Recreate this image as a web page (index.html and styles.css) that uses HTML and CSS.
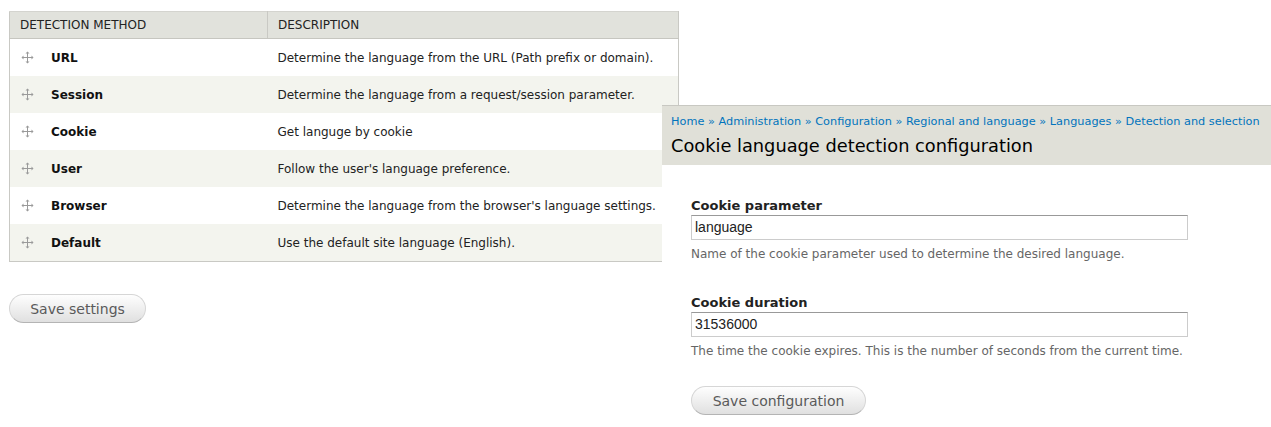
FILE: index.html
```html
<!DOCTYPE html>
<html>
<head>
<meta charset="utf-8">
<link rel="stylesheet" href="styles.css">
</head>
<body>
<div class="page">
  <table class="methods">
    <thead>
      <tr><th class="col-method">DETECTION METHOD</th><th>DESCRIPTION</th></tr>
    </thead>
    <tbody>
      <tr><td class="name"><span class="handle"><svg width="13" height="13" viewBox="0 0 13 13"><path d="M6.5 1v11M1 6.5h11" stroke="#9a9a9a" stroke-width="1"/><path d="M6.5 0.5l-2 2h4zM6.5 12.5l-2-2h4zM0.5 6.5l2-2v4zM12.5 6.5l-2-2v4z" fill="#9a9a9a"/></svg></span><b>URL</b></td><td>Determine the language from the URL (Path prefix or domain).</td></tr>
      <tr class="even"><td class="name"><span class="handle"><svg width="13" height="13" viewBox="0 0 13 13"><path d="M6.5 1v11M1 6.5h11" stroke="#9a9a9a" stroke-width="1"/><path d="M6.5 0.5l-2 2h4zM6.5 12.5l-2-2h4zM0.5 6.5l2-2v4zM12.5 6.5l-2-2v4z" fill="#9a9a9a"/></svg></span><b>Session</b></td><td>Determine the language from a request/session parameter.</td></tr>
      <tr><td class="name"><span class="handle"><svg width="13" height="13" viewBox="0 0 13 13"><path d="M6.5 1v11M1 6.5h11" stroke="#9a9a9a" stroke-width="1"/><path d="M6.5 0.5l-2 2h4zM6.5 12.5l-2-2h4zM0.5 6.5l2-2v4zM12.5 6.5l-2-2v4z" fill="#9a9a9a"/></svg></span><b>Cookie</b></td><td>Get languge by cookie</td></tr>
      <tr class="even"><td class="name"><span class="handle"><svg width="13" height="13" viewBox="0 0 13 13"><path d="M6.5 1v11M1 6.5h11" stroke="#9a9a9a" stroke-width="1"/><path d="M6.5 0.5l-2 2h4zM6.5 12.5l-2-2h4zM0.5 6.5l2-2v4zM12.5 6.5l-2-2v4z" fill="#9a9a9a"/></svg></span><b>User</b></td><td>Follow the user's language preference.</td></tr>
      <tr><td class="name"><span class="handle"><svg width="13" height="13" viewBox="0 0 13 13"><path d="M6.5 1v11M1 6.5h11" stroke="#9a9a9a" stroke-width="1"/><path d="M6.5 0.5l-2 2h4zM6.5 12.5l-2-2h4zM0.5 6.5l2-2v4zM12.5 6.5l-2-2v4z" fill="#9a9a9a"/></svg></span><b>Browser</b></td><td>Determine the language from the browser's language settings.</td></tr>
      <tr class="even"><td class="name"><span class="handle"><svg width="13" height="13" viewBox="0 0 13 13"><path d="M6.5 1v11M1 6.5h11" stroke="#9a9a9a" stroke-width="1"/><path d="M6.5 0.5l-2 2h4zM6.5 12.5l-2-2h4zM0.5 6.5l2-2v4zM12.5 6.5l-2-2v4z" fill="#9a9a9a"/></svg></span><b>Default</b></td><td>Use the default site language (English).</td></tr>
    </tbody>
  </table>
  <button class="btn btn-settings">Save settings</button>

  <div class="panel">
    <div class="panel-head">
      <div class="crumbs"><a>Home</a> » <a>Administration</a> » <a>Configuration</a> » <a>Regional and language</a> » <a>Languages</a> » <a>Detection and selection</a></div>
      <h1 class="title">Cookie language detection configuration</h1>
    </div>
    <div class="form">
      <div class="field">
        <label class="label">Cookie parameter</label>
        <div class="input">language</div>
        <div class="desc">Name of the cookie parameter used to determine the desired language.</div>
      </div>
      <div class="field field-last">
        <label class="label">Cookie duration</label>
        <div class="input">31536000</div>
        <div class="desc">The time the cookie expires. This is the number of seconds from the current time.</div>
      </div>
      <button class="btn btn-config">Save configuration</button>
    </div>
  </div>
</div>
</body>
</html>
```

FILE: styles.css
```css
html, body {
  margin: 0;
  padding: 0;
  background: #fff;
}
.page {
  position: relative;
  width: 1271px;
  height: 427px;
  overflow: hidden;
  padding: 11px 0 0 9px;
  box-sizing: border-box;
  font-family: "DejaVu Sans", Verdana, sans-serif;
  color: #000;
}
.methods {
  border-collapse: collapse;
  width: 670px;
  font-size: 12px;
  border: 1px solid #c9c9c4;
  border-top-color: #d4d4cf;
}
.methods th {
  background: #e1e2dc;
  font-weight: normal;
  text-align: left;
  height: 26px;
  padding: 0 10px;
  border-bottom: 1px solid #c6c6c0;
  color: #222;
}
.methods th.col-method {
  width: 237px;
  border-right: 1px solid #c9c9c4;
}
.methods td {
  height: 37px;
  padding: 0 10px;
  color: #222;
}
.methods tr.even td {
  background: #f3f4ee;
}
.methods td.name {
  padding-left: 10px;
}
.handle {
  display: inline-block;
  width: 13px;
  height: 13px;
  margin: 0 17px 0 1px;
  vertical-align: -2px;
}
.handle svg { display: block; }
.methods b {
  font-weight: bold;
  color: #111;
}
.btn {
  display: block;
  font-family: "DejaVu Sans", Verdana, sans-serif;
  font-size: 14px;
  color: #5a5a5a;
  background: linear-gradient(#fefefe, #e0e0e0);
  border: 1px solid #d6d6d6;
  border-bottom-color: #b4b4b4;
  border-radius: 15px;
  height: 29px;
  padding: 0 20px;
  cursor: pointer;
}
.btn-settings {
  margin-top: 32px;
  width: 137px;
}
.panel {
  position: absolute;
  left: 662px;
  top: 105px;
  right: 0;
  bottom: 0;
  background: #fff;
}
.panel-head {
  background: #e0e0d8;
  height: 60px;
  padding: 8px 0 0 9px;
  box-sizing: border-box;
  border-top: 1px solid #c8c8c2;
}
.crumbs {
  font-size: 11.3px;
  color: #0074bd;
  line-height: 15px;
}
.crumbs a { color: #0074bd; }
.title {
  margin: 5px 0 0;
  font-size: 17.8px;
  font-weight: normal;
  line-height: 24px;
  color: #000;
}
.form {
  padding: 33px 0 0 29px;
}
.field {
  margin-bottom: 33px;
}
.field-last {
  margin-bottom: 0;
}
.label {
  display: block;
  font-weight: bold;
  font-size: 13px;
  line-height: 16px;
  color: #222;
  margin-bottom: 1px;
}
.input {
  width: 497px;
  height: 25px;
  box-sizing: border-box;
  border: 1px solid #ccc;
  border-top-color: #999;
  font-family: "Liberation Sans", Arial, sans-serif;
  font-size: 14px;
  line-height: 23px;
  padding-left: 3px;
  color: #222;
}
.desc {
  font-size: 12px;
  color: #666;
  margin-top: 7px;
  line-height: 15px;
}
.btn-config {
  width: 175px;
  margin-top: 27px;
}
```
